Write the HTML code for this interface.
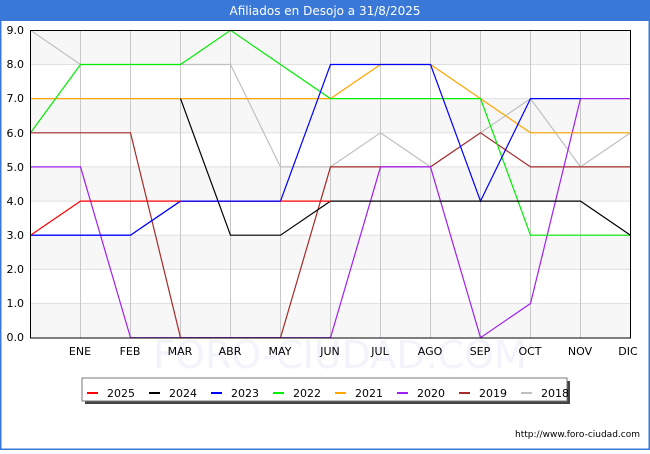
<!DOCTYPE html>
<html><head><style>
body{margin:0;width:650px;height:450px;overflow:hidden;background:#fff;font-family:"DejaVu Sans","Liberation Sans",sans-serif;}
</style></head><body>
<svg width="650" height="450" xmlns="http://www.w3.org/2000/svg" font-family="DejaVu Sans, Liberation Sans, sans-serif">
<rect x="0.5" y="0.5" width="649" height="449" fill="#fff" stroke="#3a78d8" stroke-width="2"/>
<rect x="0" y="0" width="650" height="21" fill="#3a78d8"/>
<text x="325" y="15" fill="#fff" font-size="12" text-anchor="middle">Afiliados en Desojo a 31/8/2025</text>
<g fill="#f7f7f7">
<rect x="31" y="30.3" width="599" height="34.2"/>
<rect x="31" y="98.6" width="599" height="34.2"/>
<rect x="31" y="166.9" width="599" height="34.2"/>
<rect x="31" y="235.2" width="599" height="34.2"/>
<rect x="31" y="303.5" width="599" height="34.2"/>
</g>
<g stroke="#e0e0e0" stroke-width="1">
<line x1="31" x2="630" y1="64.5" y2="64.5"/><line x1="31" x2="630" y1="98.6" y2="98.6"/><line x1="31" x2="630" y1="132.8" y2="132.8"/><line x1="31" x2="630" y1="166.9" y2="166.9"/><line x1="31" x2="630" y1="201.1" y2="201.1"/><line x1="31" x2="630" y1="235.2" y2="235.2"/><line x1="31" x2="630" y1="269.4" y2="269.4"/><line x1="31" x2="630" y1="303.5" y2="303.5"/>
</g>
<g stroke="#c8c8c8" stroke-width="1">
<line x1="80.5" x2="80.5" y1="30" y2="338"/><line x1="130.5" x2="130.5" y1="30" y2="338"/><line x1="180.5" x2="180.5" y1="30" y2="338"/><line x1="230.5" x2="230.5" y1="30" y2="338"/><line x1="280.5" x2="280.5" y1="30" y2="338"/><line x1="330.5" x2="330.5" y1="30" y2="338"/><line x1="380.5" x2="380.5" y1="30" y2="338"/><line x1="430.5" x2="430.5" y1="30" y2="338"/><line x1="480.5" x2="480.5" y1="30" y2="338"/><line x1="530.5" x2="530.5" y1="30" y2="338"/><line x1="580.5" x2="580.5" y1="30" y2="338"/>
</g>
<text x="340" y="368" fill="#f2f3fb" font-size="38" text-anchor="middle">FORO-CIUDAD.COM</text>
<g fill="none" stroke-width="1.2">
<polyline stroke="#c0c0c0" points="30.5,30.3 80.5,64.5 130.5,64.5 180.5,64.5 230.5,64.5 280.5,166.9 330.5,166.9 380.5,132.8 430.5,166.9 480.5,132.8 530.5,98.6 580.5,166.9 630.5,132.8"/>
<polyline stroke="#a52a2a" points="30.5,132.8 80.5,132.8 130.5,132.8 180.5,337.7 230.5,337.7 280.5,337.7 330.5,166.9 380.5,166.9 430.5,166.9 480.5,132.8 530.5,166.9 580.5,166.9 630.5,166.9"/>
<polyline stroke="#a020f0" points="30.5,166.9 80.5,166.9 130.5,337.7 180.5,337.7 230.5,337.7 280.5,337.7 330.5,337.7 380.5,166.9 430.5,166.9 480.5,337.7 530.5,303.5 580.5,98.6 630.5,98.6"/>
<polyline stroke="#ffa500" points="30.5,98.6 80.5,98.6 130.5,98.6 180.5,98.6 230.5,98.6 280.5,98.6 330.5,98.6 380.5,64.5 430.5,64.5 480.5,98.6 530.5,132.8 580.5,132.8 630.5,132.8"/>
<polyline stroke="#00ee00" points="30.5,132.8 80.5,64.5 130.5,64.5 180.5,64.5 230.5,30.3 280.5,64.5 330.5,98.6 380.5,98.6 430.5,98.6 480.5,98.6 530.5,235.2 580.5,235.2 630.5,235.2"/>
<polyline stroke="#0000ff" points="30.5,235.2 80.5,235.2 130.5,235.2 180.5,201.1 230.5,201.1 280.5,201.1 330.5,64.5 380.5,64.5 430.5,64.5 480.5,201.1 530.5,98.6 580.5,98.6"/>
<polyline stroke="#000" points="180.5,98.6 230.5,235.2 280.5,235.2 330.5,201.1 380.5,201.1 430.5,201.1 480.5,201.1 530.5,201.1 580.5,201.1 630.5,235.2"/>
<polyline stroke="#0000ff" points="30.5,235.2 80.5,235.2 130.5,235.2 180.5,201.1"/>
<polyline stroke="#ff0000" points="30.5,235.2 80.5,201.1 130.5,201.1 180.5,201.1 230.5,201.1 280.5,201.1 330.5,201.1"/>
<polyline stroke="#0000ff" points="180.5,201.1 280.5,201.1"/>
</g>
<rect x="30.5" y="30.5" width="600" height="307.5" fill="none" stroke="#000" stroke-width="1"/>
<g font-size="11" fill="#000" text-anchor="end">
<text x="24" y="34">9.0</text><text x="24" y="68">8.0</text><text x="24" y="102">7.0</text><text x="24" y="137">6.0</text><text x="24" y="171">5.0</text><text x="24" y="205">4.0</text><text x="24" y="239">3.0</text><text x="24" y="273">2.0</text><text x="24" y="307">1.0</text><text x="24" y="341">0.0</text>
</g>
<g font-size="11" fill="#000" text-anchor="middle">
<text x="80" y="355">ENE</text><text x="130" y="355">FEB</text><text x="180" y="355">MAR</text><text x="230" y="355">ABR</text><text x="280" y="355">MAY</text><text x="330" y="355">JUN</text><text x="380" y="355">JUL</text><text x="430" y="355">AGO</text><text x="480" y="355">SEP</text><text x="530" y="355">OCT</text><text x="580" y="355">NOV</text><text x="628" y="355">DIC</text>
</g>
<rect x="85" y="381" width="485" height="23" fill="#444"/>
<rect x="82" y="378" width="485" height="23" fill="#fff" stroke="#777" stroke-width="1"/>
<g stroke-width="2">
<line x1="87" x2="98" y1="393" y2="393" stroke="#ff0000"/>
<line x1="149" x2="160" y1="393" y2="393" stroke="#000"/>
<line x1="211" x2="222" y1="393" y2="393" stroke="#0000ff"/>
<line x1="273" x2="284" y1="393" y2="393" stroke="#00ee00"/>
<line x1="335" x2="346" y1="393" y2="393" stroke="#ffa500"/>
<line x1="397" x2="408" y1="393" y2="393" stroke="#a020f0"/>
<line x1="459" x2="470" y1="393" y2="393" stroke="#a52a2a"/>
<line x1="521" x2="532" y1="393" y2="393" stroke="#c0c0c0"/>
</g>
<g font-size="11" fill="#000">
<text x="107" y="397">2025</text><text x="169" y="397">2024</text><text x="231" y="397">2023</text><text x="293" y="397">2022</text><text x="355" y="397">2021</text><text x="417" y="397">2020</text><text x="479" y="397">2019</text><text x="541" y="397">2018</text>
</g>
<text x="640" y="437" font-size="9" fill="#000" text-anchor="end">http://www.foro-ciudad.com</text>
</svg>
</body></html>
